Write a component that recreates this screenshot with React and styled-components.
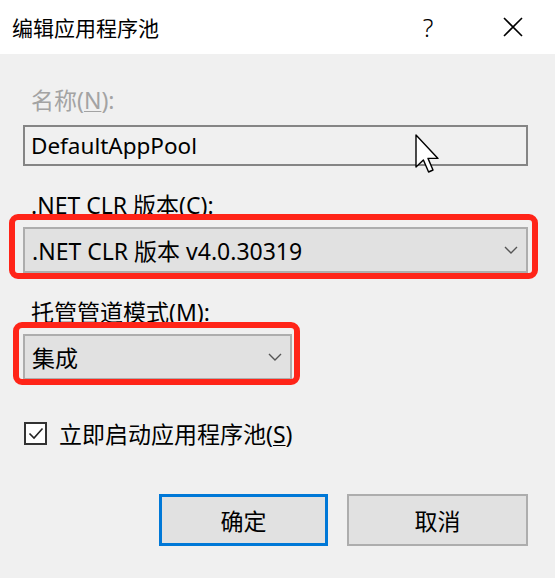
import React from 'react';
import styled, { createGlobalStyle } from 'styled-components';

const GlobalStyle = createGlobalStyle`
  html, body {
    margin: 0;
    padding: 0;
    background: #f0f0f0;
  }
  body {
    font-family: "Noto Sans", "Noto Sans CJK SC", sans-serif;
  }
`;

const Dialog = styled.div`
  width: 555px;
  height: 578px;
  background: #f0f0f0;
  display: flex;
  flex-direction: column;
  overflow: hidden;
`;

const TitleBar = styled.div`
  height: 54px;
  background: #ffffff;
  display: flex;
  align-items: center;
  padding-left: 12px;
  padding-right: 9px;
`;

const Title = styled.div`
  flex: 1;
  font-size: 21px;
  color: #000;
`;

const TitleButton = styled.div`
  width: ${(p) => p.w}px;
  margin-left: ${(p) => p.gap || 0}px;
  height: 54px;
  display: flex;
  align-items: center;
  justify-content: center;
  font-size: 25px;
  color: #000;
  font-weight: 300;
`;

const Under = styled.span`
  text-decoration: underline;
  text-underline-offset: 2px;
  text-decoration-thickness: 1px;
`;

const Body = styled.div`
  padding: 0 27px 0 23px;
  display: flex;
  flex-direction: column;
  font-size: 23px;
  color: #000;
`;

const Label = styled.div`
  height: 24px;
  line-height: 24px;
  padding-left: 8px;
  margin-top: ${(p) => p.top}px;
  color: ${(p) => (p.disabled ? '#a3a3a3' : '#000')};
`;

const TextBox = styled.div`
  position: relative;
  margin-top: 13px;
  height: 41px;
  box-sizing: border-box;
  border: 2px solid #858585;
  background: #f0f0f0;
  display: flex;
  align-items: center;
  padding-left: 6px;
  font-size: 22.5px;
`;

const Cursor = styled.svg`
  position: absolute;
  left: 390px;
  top: 7px;
`;

const Marked = styled.div`
  position: relative;
  margin-top: 10px;
  width: ${(p) => p.width};

  &::after {
    content: '';
    position: absolute;
    left: ${(p) => p.inset[3]}px;
    top: ${(p) => p.inset[0]}px;
    right: ${(p) => p.inset[1]}px;
    bottom: ${(p) => p.inset[2]}px;
    border: 6px solid #ff2418;
    border-radius: 9px;
    pointer-events: none;
  }
`;

const Select = styled.div`
  height: 46px;
  box-sizing: border-box;
  border: 2px solid #adadad;
  background: #e1e1e1;
  display: flex;
  align-items: center;
  padding: 0 8px 0 7px;
`;

const SelectText = styled.span`
  flex: 1;
`;

const CheckRow = styled.div`
  margin-top: 41px;
  height: 24px;
  display: flex;
  align-items: center;
  gap: 12px;
  padding-left: 1px;
`;

const CheckBox = styled.div`
  width: 23px;
  height: 23px;
  box-sizing: border-box;
  border: 2px solid #333;
  background: #fff;
  display: flex;
  align-items: center;
  justify-content: center;
`;

const Buttons = styled.div`
  margin-top: 49px;
  display: flex;
  justify-content: flex-end;
  gap: 19px;
`;

const Button = styled.div`
  width: ${(p) => p.w}px;
  height: 52px;
  box-sizing: border-box;
  border: ${(p) => (p.primary ? '3px solid #0078d7' : '2px solid #adadad')};
  background: #e1e1e1;
  display: flex;
  align-items: center;
  justify-content: center;
`;

const Chevron = () => (
  <svg width="14" height="8" viewBox="0 0 14 8">
    <path d="M1 1 L7 7 L13 1" fill="none" stroke="#555" strokeWidth="1.4" />
  </svg>
);

export default function App() {
  return (
    <Dialog>
      <GlobalStyle />
      <TitleBar>
        <Title>编辑应用程序池</Title>
        <TitleButton w={52}>?</TitleButton>
        <TitleButton w={66} gap={26}>
          <svg width="20" height="20" viewBox="0 0 20 20">
            <path d="M1 1 L19 19 M19 1 L1 19" stroke="#000" strokeWidth="1.6" />
          </svg>
        </TitleButton>
      </TitleBar>
      <Body>
        <Label top={34} disabled>
          名称(<Under>N</Under>):
        </Label>
        <TextBox>
          DefaultAppPool
          <Cursor width="26" height="40" viewBox="0 0 13 20">
            <path
              d="M0.5 0.5 L0.5 16.5 L4.2 13 L6.8 19 L9 18 L6.5 12.2 L11.5 12.2 Z"
              fill="#fff"
              stroke="#000"
              strokeWidth="0.7"
              strokeLinejoin="round"
            />
          </Cursor>
        </TextBox>
        <Label top={27}>
          .NET CLR 版本(<Under>C</Under>):
        </Label>
        <Marked width="auto" inset={[-13, -10, -6, -14]}>
          <Select>
            <SelectText>.NET CLR 版本 v4.0.30319</SelectText>
            <Chevron />
          </Select>
        </Marked>
        <Label top={27}>
          托管管道模式(<Under>M</Under>):
        </Label>
        <Marked width="269px" inset={[-12, -8, -5, -10]}>
          <Select>
            <SelectText>集成</SelectText>
            <Chevron />
          </Select>
        </Marked>
        <CheckRow>
          <CheckBox>
            <svg width="16" height="13" viewBox="0 0 16 13">
              <path d="M1.5 6.5 L6 11 L14.5 1.5" fill="none" stroke="#222" strokeWidth="1.6" />
            </svg>
          </CheckBox>
          <span>
            立即启动应用程序池(<Under>S</Under>)
          </span>
        </CheckRow>
        <Buttons>
          <Button primary w={169}>确定</Button>
          <Button w={181}>取消</Button>
        </Buttons>
      </Body>
    </Dialog>
  );
}
